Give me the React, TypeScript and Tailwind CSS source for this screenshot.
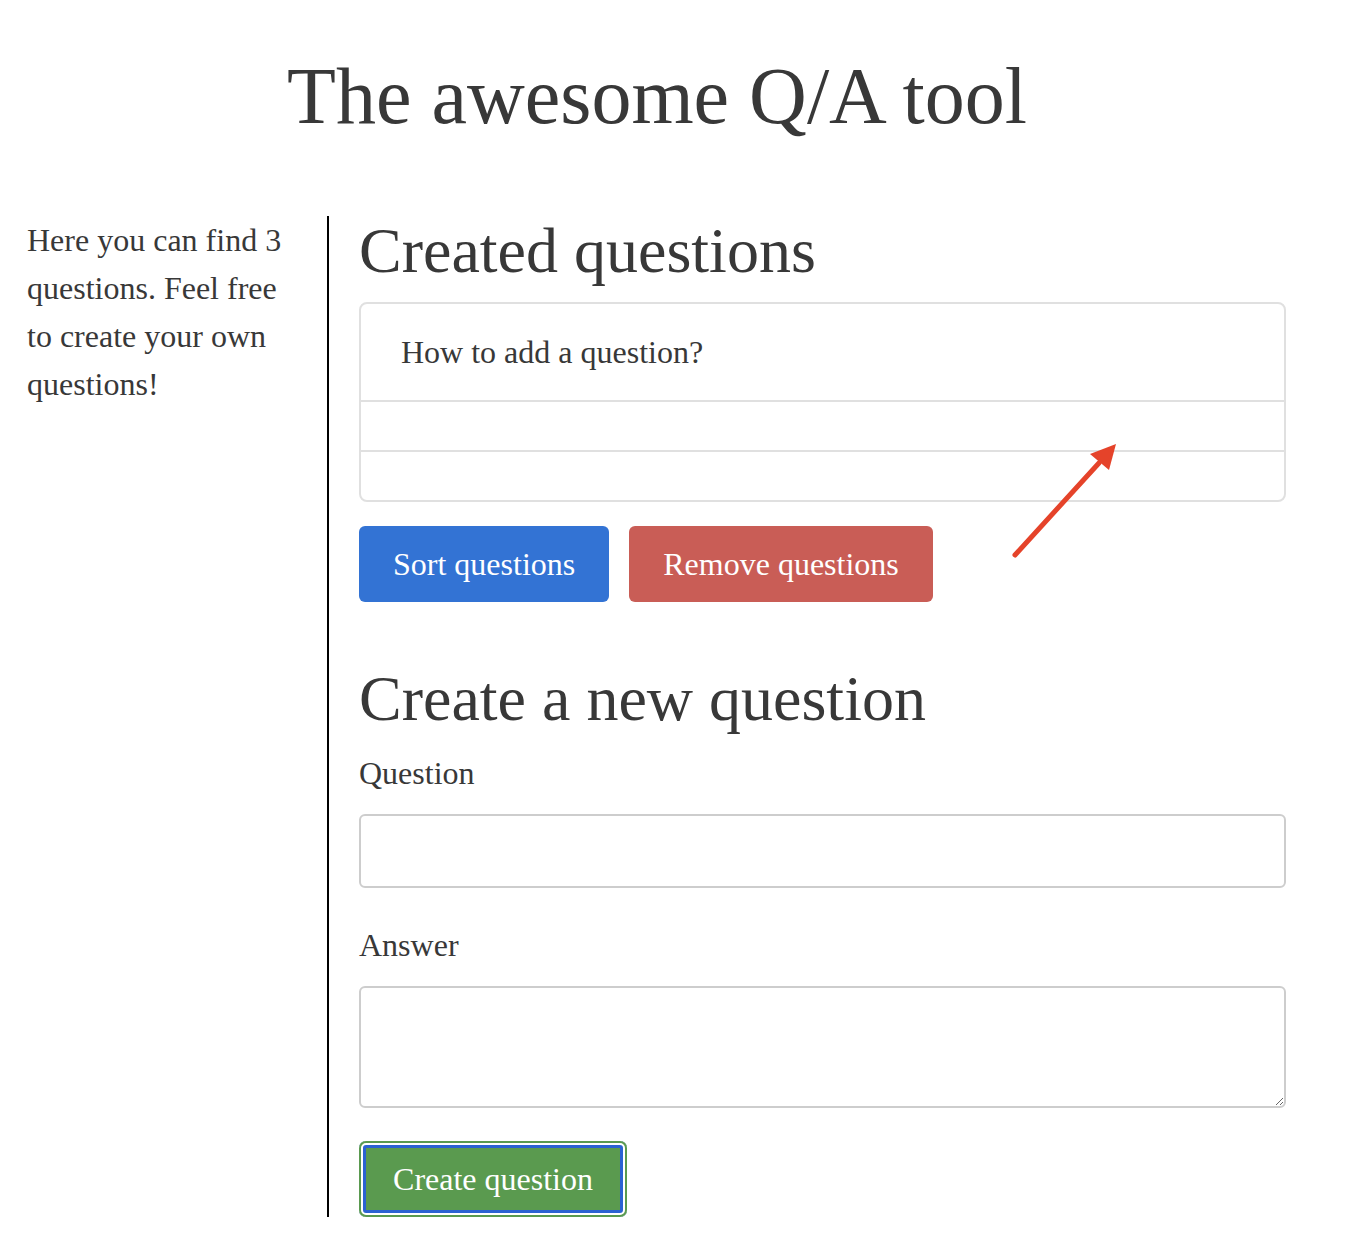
import React from "react";

const QUESTIONS = ["How to add a question?", "", ""];

export default function App() {
  return (
    <div className="relative min-h-screen bg-white text-[#383838] font-['Liberation_Serif',serif]">
      {/* Title */}
      <h1 className="pt-[48px] pr-[32px] text-center text-[80px] leading-[96px] font-normal">
        The awesome Q/A tool
      </h1>

      <div className="mt-[72px] flex">
        {/* Sidebar */}
        <aside className="w-[329px] shrink-0 border-r-2 border-black pl-[27px] pr-[40px] text-[32px] leading-[48px]">
          Here you can find 3 questions. Feel free to create your own questions!
        </aside>

        {/* Main */}
        <main className="flex-1 pl-[30px] pr-[60px]">
          <h2 className="text-[64px] leading-[70px] font-normal">Created questions</h2>
          <ul className="mt-[16px] rounded-[8px] border-2 border-[#e0e0e0]">
            {QUESTIONS.map((q, i) => (
              <li
                key={i}
                className={`px-[40px] py-[24px] text-[32px] leading-[48px] ${i > 0 ? "border-t-2 border-[#e0e0e0]" : ""}`}
              >
                {q}
              </li>
            ))}
          </ul>

          <div className="mt-[24px] flex gap-[20px]">
            <button className="h-[76px] rounded-[6px] bg-[#3373d4] px-[34px] text-[32px] text-white">
              Sort questions
            </button>
            <button className="h-[76px] rounded-[6px] bg-[#c95d56] px-[34px] text-[32px] text-white">
              Remove questions
            </button>
          </div>

          <h2 className="mt-[62px] text-[64px] leading-[70px] font-normal">Create a new question</h2>

          <label className="mt-[15px] block text-[32px] leading-[48px]">Question</label>
          <input
            type="text"
            className="mt-[17px] block h-[74px] w-full rounded-[6px] border-2 border-[#cdcdcd] bg-white px-[24px] text-[32px] outline-none"
          />

          <label className="mt-[33px] block text-[32px] leading-[48px]">Answer</label>
          <textarea className="mt-[17px] block h-[122px] w-full rounded-[6px] border-2 border-[#cdcdcd] bg-white px-[24px] text-[32px] outline-none" />

          <button className="mt-[33px] h-[76px] w-[268px] rounded-[7px] bg-[#5a9a4f] text-[32px] text-white shadow-[inset_0_0_0_2px_#5a9a4f,inset_0_0_0_4px_#ffffff,inset_0_0_0_7px_#2b62d2]">
            Create question
          </button>
        </main>
      </div>

      {/* Annotation arrow */}
      <svg className="absolute left-[1004px] top-[436px]" width="124" height="130" viewBox="0 0 124 130">
        <line x1="11" y1="119" x2="95" y2="27" stroke="#e5432a" strokeWidth="5" strokeLinecap="round" />
        <polygon points="112,8 86,18 105,34" fill="#e5432a" />
      </svg>
    </div>
  );
}
